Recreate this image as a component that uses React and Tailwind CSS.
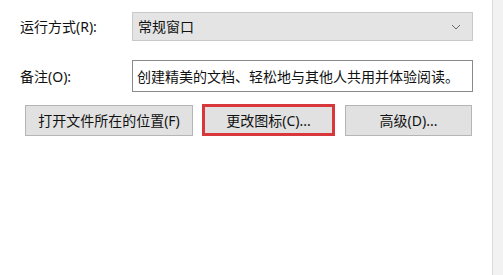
import React from 'react';

const font = { fontFamily: '"Noto Sans", "Noto Sans CJK SC", sans-serif' };

const Chevron = () => (
  <svg width="10" height="6" viewBox="0 0 10 6" className="text-[#6a6a6a]">
    <path d="M1 1 L5 5 L9 1" fill="none" stroke="currentColor" strokeWidth="1" />
  </svg>
);

const App = () => {
  return (
    <div
      className="w-[503px] h-[275px] flex bg-white text-[14px] text-[#111] overflow-hidden"
      style={font}
    >
      <div className="flex-1 pt-[12px]">
        {/* Run mode */}
        <div className="flex items-center">
          <span className="w-[132px] pl-[20px] shrink-0">运行方式(R):</span>
          <div className="w-[341px] h-[29px] flex items-center justify-between pl-[5px] pr-[11px] bg-[#e4e4e4] border border-[#c9c9c9]">
            <span>常规窗口</span>
            <Chevron />
          </div>
        </div>

        {/* Comment */}
        <div className="flex items-center mt-[19px]">
          <span className="w-[132px] pl-[20px] shrink-0">备注(O):</span>
          <div className="w-[341px] h-[32px] flex items-center pl-[4px] bg-white border border-[#8a8a8a]">
            <span className="whitespace-nowrap">创建精美的文档、轻松地与其他人共用并体验阅读。</span>
          </div>
        </div>

        {/* Buttons */}
        <div className="flex items-center mt-[12px] pl-[25px]">
          <button className="w-[168px] h-[31px] bg-[#e1e1e1] border border-[#b5b5b5] flex items-center justify-center">
            打开文件所在的位置(F)
          </button>
          <button className="ml-[9px] w-[133px] h-[32px] bg-[#e1e1e1] border-[3px] border-[#d8383c] flex items-center justify-center">
            更改图标(C)...
          </button>
          <button className="ml-[10px] w-[127px] h-[31px] bg-[#e1e1e1] border border-[#b5b5b5] flex items-center justify-center">
            高级(D)...
          </button>
        </div>
      </div>
      <div className="w-[11px] shrink-0 border-l border-[#dadada] bg-[#f2f2f2]" />
    </div>
  );
};

export default App;
